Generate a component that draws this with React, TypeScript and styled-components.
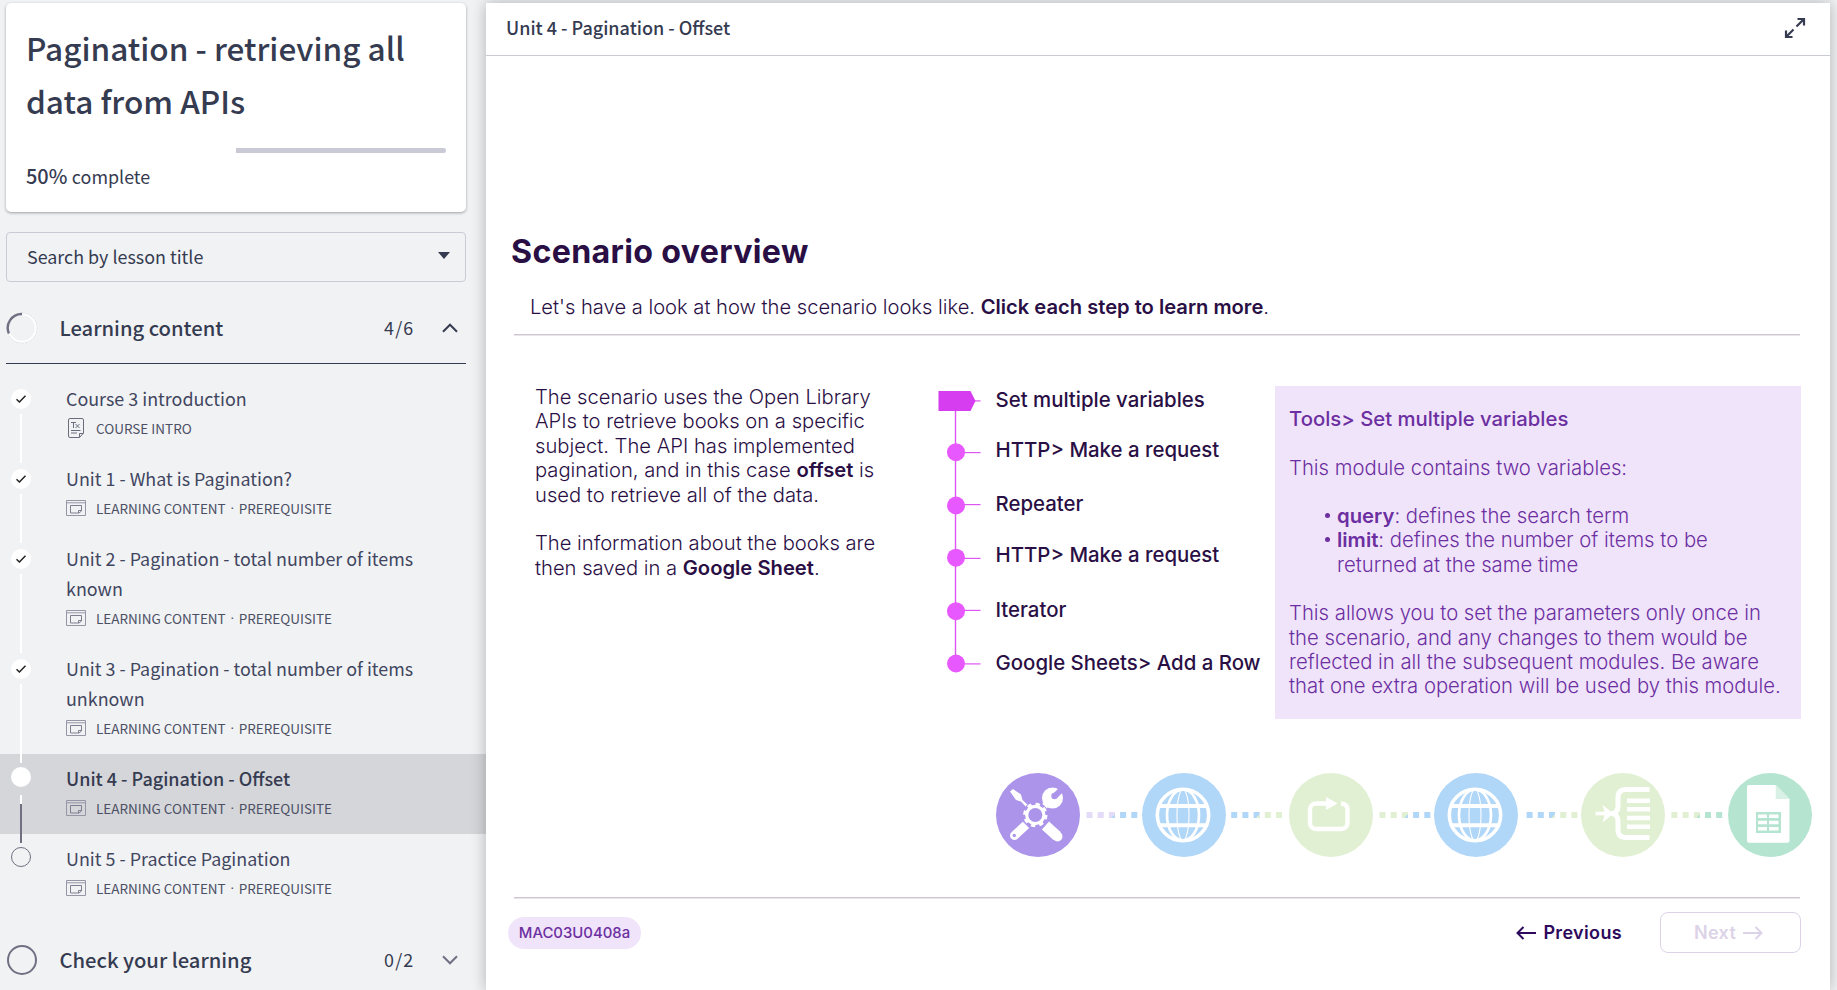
import React from "react";
import styled, { createGlobalStyle, css } from "styled-components";

const INK = "#353b50";
const MUTED = "#6f7183";
const LINE = "#c9cad6";
const SIDEBAR = "#f1f2f4";
const DEEP = "#2a0f45";
const VIOLET = "#6c2fa1";
const LILAC = "#f0e4fa";
const PINK = "#e858ff";

const GlobalStyle = createGlobalStyle`
  * { box-sizing: border-box; }
  html, body { margin: 0; height: 100%; }
  body { background: ${SIDEBAR}; overflow: hidden; }
  h1, h2, h3, p, ul { margin: 0; padding: 0; font-weight: inherit; }
`;

const Page = styled.div`
  display: flex;
  width: 1837px;
  height: 990px;
  overflow: hidden;
  background: ${SIDEBAR};
`;

/* ---------- Sidebar ---------- */

const Sidebar = styled.aside`
  width: 486px;
  flex: none;
  padding-top: 3px;
  display: flex;
  flex-direction: column;
  color: ${INK};
  font-family: "Noto Sans CJK SC", "Open Sans", sans-serif;
  font-size: 17.9px;
`;

const CourseCard = styled.section`
  margin: 0 20px 0 6px;
  height: 209px;
  flex: none;
  padding: 18px 20px 0;
  background: #fff;
  border-radius: 5px;
  box-shadow: 0 1px 3px rgba(0, 0, 0, 0.35);
`;

const CourseTitle = styled.h1`
  font-size: 31.55px;
  font-weight: 500;
  line-height: 53px;
  white-space: nowrap;
`;

const ProgressTrack = styled.div`
  margin-top: 21px;
  height: 5px;
  border-radius: 3px;
  background: linear-gradient(to right, #fff 50%, ${LINE} 50%);
`;

const ProgressText = styled.p`
  display: flex;
  align-items: baseline;
  gap: 4.5px;
  margin-top: 8px;
  line-height: 30px;
`;

const Percent = styled.strong`
  font-size: 19.9px;
  font-weight: 500;
`;

const SearchSelect = styled.div`
  margin: 20px 20px 0 6px;
  height: 50px;
  flex: none;
  display: flex;
  align-items: center;
  justify-content: space-between;
  padding: 0 15px 3px 20px;
  border: 1px solid ${LINE};
  border-radius: 4px;
`;

const SectionHeader = styled.header<{ $ruled?: boolean }>`
  margin: 0 20px 0 6px;
  height: 72px;
  flex: none;
  display: flex;
  align-items: center;
  padding-right: 8px;
  ${(p) =>
    p.$ruled &&
    css`
      margin-top: 10px;
      border-bottom: 1px solid ${INK};
    `}
`;

const SectionTitle = styled.h2`
  flex: 1;
  margin-left: 21.5px;
  font-size: 20.2px;
  font-weight: 500;
  line-height: 30px;
`;

const SectionCount = styled.span`
  width: 32px;
  margin: -2px 26px 0 0;
  letter-spacing: 1.2px;
  line-height: 30px;
  white-space: nowrap;
`;

const LessonList = styled.ul`
  list-style: none;
  margin: 10px 0;
`;

const Lesson = styled.li<{ $active?: boolean }>`
  display: flex;
  align-items: stretch;
  padding-bottom: 11px;
  background: ${(p) => (p.$active ? "#d5d6da" : "transparent")};
`;

const Rail = styled.div<{ $top: number }>`
  position: relative;
  z-index: 1;
  width: 20px;
  flex: none;
  margin: 0 35px -20px 11px;
  padding-top: ${(p) => p.$top}px;
  display: flex;
  flex-direction: column;
  align-items: center;
`;

const Marker = styled.span<{ $kind: "done" | "current" | "todo" }>`
  width: 20px;
  height: 20px;
  flex: none;
  display: flex;
  align-items: center;
  justify-content: center;
  border-radius: 50%;
  ${(p) =>
    p.$kind === "todo" ? css`border: 1px solid ${MUTED};` : css`background: #fff;`}
`;

const RailLine = styled.span<{ $half?: boolean }>`
  width: 2px;
  flex: 1;
  margin-top: ${(p) => (p.$half ? 8 : 5)}px;
  background: ${(p) =>
    p.$half ? `linear-gradient(#fff 9px, ${MUTED} 9px)` : "#fff"};
`;

const LessonBody = styled.div`
  padding-top: 9px;
  width: 360px;
`;

const LessonTitle = styled.h3<{ $active?: boolean }>`
  font-size: ${(p) => (p.$active ? 18 : 17.9)}px;
  font-weight: ${(p) => (p.$active ? 500 : 400)};
  line-height: 30px;
  color: ${(p) => (p.$active ? INK : "#414660")};
`;

const LessonMeta = styled.div`
  display: flex;
  align-items: center;
  height: 30px;
  color: #4c5064;
  font-size: 13.5px;
  line-height: 30px;
  white-space: nowrap;
  svg { margin: 0 10px 0 0; }
`;

const Separator = styled.span`
  width: 13px;
  text-align: center;
  font-family: "Open Sans", sans-serif;
`;

/* ---------- Lesson viewer ---------- */

const Viewer = styled.main`
  width: 1344px;
  flex: none;
  margin-top: 3px;
  display: flex;
  flex-direction: column;
  background: #fff;
  box-shadow: 0 0 14px rgba(0, 0, 0, 0.27);
  z-index: 2;
`;

const ViewerBar = styled.header`
  height: 53px;
  flex: none;
  display: flex;
  align-items: center;
  justify-content: space-between;
  padding: 0 24px 4px 20px;
  border-bottom: 1px solid ${LINE};
  color: ${INK};
  font: 500 18px/30px "Noto Sans CJK SC", "Open Sans", sans-serif;
  svg { margin-top: 2px; }
`;

const Slide = styled.article`
  flex: 1;
  display: flex;
  flex-direction: column;
  padding: 175px 29px 0 28px;
  color: ${DEEP};
  font: 300 20.2px/24.4px Inter, sans-serif;
  b { font-weight: 600; }
`;

const SlideTitle = styled.h1`
  margin-left: -3px;
  padding-top: 1px;
  font-size: 32.2px;
  font-weight: 700;
  line-height: 39px;
  letter-spacing: 0.32px;
`;

const Intro = styled.p`
  margin: 24px 0 0 16px;
  height: 39px;
  line-height: 24px;
  font-size: 20.15px;
`;

const Rule = styled.hr`
  width: 1286px;
  height: 2px;
  flex: none;
  margin: 0;
  border: 0;
  background: linear-gradient(#cdc8cd 50%, #e9e4e9 50%);
`;

const Columns = styled.div`
  display: flex;
  align-items: flex-start;
  height: 383px;
  flex: none;
  padding-top: 50px;
`;

const Description = styled.div`
  width: 424px;
  padding-left: 21px;
  margin-top: -1px;
  white-space: nowrap;
  p + p { margin-top: 24.4px; }
`;

const Steps = styled.div`
  display: flex;
  width: 337px;
`;

const StepList = styled.ul`
  list-style: none;
  margin: -1px 0 0 14.5px;
  display: grid;
  grid-template-rows: 50px 53.7px 51.8px 54.2px 53.3px 30px;
  font-size: 20.4px;
  font-weight: 500;
  line-height: 30px;
  white-space: nowrap;
`;

const InfoPanel = styled.section`
  width: 526px;
  height: 333px;
  flex: none;
  padding: 21px 0 0 14px;
  background: ${LILAC};
  color: ${VIOLET};
  font-size: 20.3px;
  line-height: 24.3px;
  white-space: nowrap;
`;

const InfoHeading = styled.h2`
  font-size: 20.3px;
  font-weight: 500;
`;

const InfoText = styled.p`
  margin-top: 24.3px;
`;

const VariableList = styled.ul`
  margin: 24.3px 0 0 49px;
  list-style: none;
`;

const Variable = styled.li`
  display: flex;
  &::before {
    content: "";
    width: 5px;
    height: 5px;
    margin: 9px 7px 0 -13px;
    border-radius: 50%;
    background: ${VIOLET};
  }
`;

const Flow = styled.div`
  display: flex;
  align-items: center;
  height: 178px;
  flex: none;
  padding-top: 14px;
  margin-left: 481.5px;
  svg { flex: none; }
`;

const SlideFooter = styled.footer`
  display: flex;
  align-items: center;
  padding-top: 13px;
`;

const CodePill = styled.span`
  width: 133px;
  height: 32px;
  margin-left: -6px;
  border-radius: 16px;
  background: ${LILAC};
  color: ${VIOLET};
  font-size: 14.9px;
  font-weight: 450;
  line-height: 33px;
  text-align: center;
`;

const NavButton = styled.button<{ $outlined?: boolean }>`
  height: 41px;
  display: flex;
  align-items: center;
  justify-content: center;
  gap: 7px;
  padding: 0;
  border: 0;
  background: none;
  color: #2d0a5c;
  font: 600 18px/24px Inter, sans-serif;
  letter-spacing: 0.35px;
  ${(p) =>
    p.$outlined
      ? css`
          width: 141px;
          padding-right: 4px;
          margin-left: 38px;
          border: 1.5px solid #ddd3e8;
          border-radius: 8px;
          color: #ddd3e8;
        `
      : css`margin-left: auto;`}
`;

/* ---------- Drawings ---------- */

const ProgressRing = ({ partial }: { partial?: boolean }) => (
  <svg width="32" height="32" viewBox="0 0 32 32" fill="none">
    {partial ? (
      <>
        <circle cx="16" cy="16" r="14.8" stroke="#bfc0c8" strokeWidth=".7" strokeDasharray="2 1" />
        <circle cx="16" cy="16" r="13.8" stroke="#fff" strokeWidth="2" />
        <path d="M16 2A14 14 0 0 0 2.9 21.5" stroke={MUTED} strokeWidth="2.4" />
      </>
    ) : (
      <circle cx="16" cy="16" r="14" stroke={MUTED} strokeWidth="2" />
    )}
  </svg>
);

const Chevron = ({ up }: { up?: boolean }) => (
  <svg width="16" height="10" viewBox="0 0 16 10" fill="none" stroke={up ? INK : MUTED} strokeWidth="2">
    <path d={up ? "M1 8.7 8 1.7l7 7" : "M1 1.3l7 7 7-7"} />
  </svg>
);

const Check = () => (
  <svg width="10" height="8" viewBox="0 0 10 8" fill="none" stroke="#222" strokeWidth="1.5">
    <path d="M.5 4.2 3.4 7 9.5.8" />
  </svg>
);

const TextPageIcon = () => (
  <svg width="20" height="20" viewBox="0 0 20 20" fill="none" stroke="#6a6d7e">
    <path d="M4 .5h12q1.500 0 1.500 1.500v13l-4 4.500H4q-1.500 0-1.500-1.500V2Q2.500.5 4 .5zM13.500 19.300V15.500h4M5 4.500h5M7.500 4.500v5.500M9.500 6l4 4M13.500 6l-4 4M5 12.500h9.500M5 15h6" />
  </svg>
);

const SlideIcon = () => (
  <svg width="20" height="16" viewBox="0 0 20 16" fill="none" stroke="#9496a6">
    <path d="M.5.5h19v15H.5zM.5 2.800h19" />
    <path d="M4.500 5.500h11v5.500l-2.500 2H4.500zM12.500 13v-2.500h3" stroke="#7d7f90" />
  </svg>
);

const ExpandIcon = () => (
  <svg width="22" height="22" viewBox="0 0 22 22" fill="none" stroke={INK} strokeWidth="2.2">
    <path d="M12.500 9.500 20 2M13.500 2H20v6.500M9.500 12.500 2 20M2 13.500V20h6.500" />
  </svg>
);

const Arrow = ({ right }: { right?: boolean }) => (
  <svg width="20" height="14" viewBox="0 0 20 14" fill="none" stroke="currentColor" strokeWidth="2">
    <path d={right ? "M0 7h18.500M12.500 1l6 6-6 6" : "M20 7H1.500M7.500 1l-6 6 6 6"} />
  </svg>
);

const stepTicks = [14.5, 66.2, 118.2, 172, 224, 277.5];
const stepDots = [65.7, 119, 171.2, 224.7, 277];

const Timeline = () => (
  <svg width="43" height="290" viewBox="0 0 43 290">
    <path d="M17.500 25V277" stroke="#dd55f2" strokeWidth="1.4" />
    {stepTicks.map((y) => (
      <path key={y} d={`M26 ${y + 0.4}H42.500`} stroke="#dd55f2" strokeWidth="1.2" />
    ))}
    <path d="M.5 5H32.500L37.500 15 32.500 25H.5z" fill="#d63df0" />
    {stepDots.map((y) => (
      <circle key={y} cx="18" cy={y + 0.5} r="9" fill={PINK} />
    ))}
  </svg>
);

const Disc = ({ fill, children }: { fill: string; children: React.ReactNode }) => (
  <svg width="84" height="84" viewBox="0 0 84 84" fill="none" stroke="#fff">
    <circle cx="42" cy="42" r="42" fill={fill} stroke="none" />
    {children}
  </svg>
);

const PURPLE = "#ab94ea";
const BLUE = "#b0d6f8";
const GREEN = "#e1f0d2";
const MINT = "#b5e5d0";

const ToolsDisc = () => (
  <Disc fill={PURPLE}>
    <path d="M14 18.500 17 16 25 21.500 26.500 27 33 33 31 35 25 28.500 20 27z" fill="#fff" stroke="none" />
    <path d="M47 35 53 28" strokeWidth="6.500" />
    <circle cx="56.500" cy="25" r="10.500" fill="#fff" stroke="none" />
    <path d="M59 23 69 13" stroke={PURPLE} strokeWidth="6" />
    <circle cx="58.500" cy="23" r="3.200" fill={PURPLE} stroke="none" />
    <path d="M32 50 18.500 62.500" strokeWidth="9" strokeLinecap="round" />
    <path d="M27 47 37 57" stroke={PURPLE} strokeWidth="2.500" />
    <circle cx="18.300" cy="62.500" r="1.700" fill={PURPLE} stroke="none" />
    <path d="M49.500 52.500 61 63" strokeWidth="10.500" />
    <path d="M60.500 62.500 61.500 63.500" strokeWidth="10" strokeLinecap="round" />
    <circle cx="39.300" cy="42" r="13" fill={PURPLE} stroke="none" />
    <circle cx="39.300" cy="42" r="8.600" strokeWidth="3.200" />
    <circle cx="39.300" cy="42" r="10.900" strokeWidth="2.600" strokeDasharray="4.280 4.280" />
  </Disc>
);

const GlobeDisc = () => (
  <Disc fill={BLUE}>
    <circle cx="41" cy="42" r="25.700" strokeWidth="3.600" />
    <ellipse cx="41" cy="42" rx="16" ry="25.500" strokeWidth="2.700" />
    <ellipse cx="41" cy="42" rx="6" ry="25.500" strokeWidth="1.100" />
    <path d="M17 33H65M17 52.300H65" strokeWidth="4" />
  </Disc>
);

const RepeatDisc = () => (
  <Disc fill={GREEN}>
    <path d="M39 30.500H27a6 6 0 0 0-6 6V50a6 6 0 0 0 6 6H52.500a6 6 0 0 0 6-6V36.500Q58.500 31 52 30.500" strokeWidth="4.400" />
    <path d="M37 24 48.500 30.500 37 37z" fill="#fff" stroke="none" />
  </Disc>
);

const IteratorDisc = () => (
  <Disc fill={GREEN}>
    <path d="M68.500 16.500H45q-8 0-8 8V33q0 6-5 7.500 5 1.500 5 7.500v8.500q0 8 8 8H68.500" strokeWidth="5" />
    <path d="M46 27.700H69M46 36.300H69M46 45H69M46 53.700H69" strokeWidth="4.500" />
    <path d="M14.500 40.500H26" strokeWidth="3.600" />
    <path d="M21.500 32 32.500 40.500 21.500 49.500 24 40.500z" fill="#fff" stroke="none" />
  </Disc>
);

const SheetDisc = () => (
  <Disc fill={MINT}>
    <path d="M21 12H47.700L61.500 26V67.700a2 2 0 0 1-2 2H21a2 2 0 0 1-2-2V14a2 2 0 0 1 2-2z" fill="#fff" stroke="none" />
    <path d="M47.700 12V26H61.500z" fill="#d8f0e6" stroke="none" />
    <path d="M28 39H53V60H28z" fill={MINT} stroke="none" />
    <path d="M30 43.200H39M41 43.200H50.500M30 49.500H39M41 49.500H50.500M30 55.800H39M41 55.800H50.500" strokeWidth="3.600" />
  </Disc>
);

const Connector = ({ width, start, from, to }: { width: number; start: number; from: string; to: string }) => (
  <svg width={width} height="6" viewBox={`0 0 ${width} 6`}>
    {[0, 1, 2, 3, 4].map((i) => (
      <rect key={i} x={start + i * 11.2} y="0" width="6" height="6" fill={i < 3 ? from : to} />
    ))}
    <path d={`M${start + 28.4} 6l-3.500 0 3.500-4z`} fill={to} />
  </svg>
);

/* ---------- Content ---------- */

type LessonData = {
  title: string;
  kind: "done" | "current" | "todo";
  intro?: boolean;
  last?: boolean;
};

const lessons: LessonData[] = [
  { title: "Course 3 introduction", kind: "done", intro: true },
  { title: "Unit 1 - What is Pagination?", kind: "done" },
  { title: "Unit 2 - Pagination - total number of items known", kind: "done" },
  { title: "Unit 3 - Pagination - total number of items unknown", kind: "done" },
  { title: "Unit 4 - Pagination - Offset", kind: "current" },
  { title: "Unit 5 - Practice Pagination", kind: "todo", last: true },
];

const steps = [
  "Set multiple variables",
  "HTTP> Make a request",
  "Repeater",
  "HTTP> Make a request",
  "Iterator",
  "Google Sheets> Add a Row",
];

const LessonItem = ({ title, kind, intro, last }: LessonData) => {
  const active = kind === "current";
  return (
    <Lesson $active={active}>
      <Rail $top={kind === "done" ? 15 : 13}>
        <Marker $kind={kind}>{kind === "done" && <Check />}</Marker>
        {!last && <RailLine $half={active} />}
      </Rail>
      <LessonBody>
        <LessonTitle $active={active}>{title}</LessonTitle>
        <LessonMeta>
          {intro ? <TextPageIcon /> : <SlideIcon />}
          {intro ? (
            "COURSE INTRO"
          ) : (
            <>
              LEARNING CONTENT<Separator>·</Separator>PREREQUISITE
            </>
          )}
        </LessonMeta>
      </LessonBody>
    </Lesson>
  );
};

export default function App() {
  return (
    <Page>
      <GlobalStyle />
      <Sidebar>
        <CourseCard>
          <CourseTitle>
            Pagination - retrieving all
            <br />
            data from APIs
          </CourseTitle>
          <ProgressTrack />
          <ProgressText>
            <Percent>50%</Percent> complete
          </ProgressText>
        </CourseCard>
        <SearchSelect>
          Search by lesson title
          <svg width="12" height="7" viewBox="0 0 12 7">
            <path d="M0 0h12L6 7z" fill={INK} />
          </svg>
        </SearchSelect>
        <SectionHeader $ruled>
          <ProgressRing partial />
          <SectionTitle>Learning content</SectionTitle>
          <SectionCount>4/6</SectionCount>
          <Chevron up />
        </SectionHeader>
        <LessonList>
          {lessons.map((l) => (
            <LessonItem key={l.title} {...l} />
          ))}
        </LessonList>
        <SectionHeader>
          <ProgressRing />
          <SectionTitle>Check your learning</SectionTitle>
          <SectionCount>0/2</SectionCount>
          <Chevron />
        </SectionHeader>
      </Sidebar>

      <Viewer>
        <ViewerBar>
          Unit 4 - Pagination - Offset
          <ExpandIcon />
        </ViewerBar>
        <Slide>
          <SlideTitle>Scenario overview</SlideTitle>
          <Intro>
            Let's have a look at how the scenario looks like. <b>Click each step to learn more</b>.
          </Intro>
          <Rule />
          <Columns>
            <Description>
              <p>
                The scenario uses the Open Library
                <br />
                APIs to retrieve books on a specific
                <br />
                subject. The API has implemented
                <br />
                pagination, and in this case <b>offset</b> is
                <br />
                used to retrieve all of the data.
              </p>
              <p>
                The information about the books are
                <br />
                then saved in a <b>Google Sheet</b>.
              </p>
            </Description>
            <Steps>
              <Timeline />
              <StepList>
                {steps.map((s, i) => (
                  <li key={i}>{s}</li>
                ))}
              </StepList>
            </Steps>
            <InfoPanel>
              <InfoHeading>Tools&gt; Set multiple variables</InfoHeading>
              <InfoText>This module contains two variables:</InfoText>
              <VariableList>
                <Variable>
                  <span>
                    <b>query</b>: defines the search term
                  </span>
                </Variable>
                <Variable>
                  <span>
                    <b>limit</b>: defines the number of items to be
                    <br />
                    returned at the same time
                  </span>
                </Variable>
              </VariableList>
              <InfoText>
                This allows you to set the parameters only once in
                <br />
                the scenario, and any changes to them would be
                <br />
                reflected in all the subsequent modules. Be aware
                <br />
                that one extra operation will be used by this module.
              </InfoText>
            </InfoPanel>
          </Columns>
          <Flow>
            <ToolsDisc />
            <Connector width={62.8} start={6.5} from="#e4dbf8" to={BLUE} />
            <GlobeDisc />
            <Connector width={62.7} start={5.2} from={BLUE} to={GREEN} />
            <RepeatDisc />
            <Connector width={61.5} start={6.5} from={GREEN} to={BLUE} />
            <GlobeDisc />
            <Connector width={62.8} start={8.6} from={BLUE} to={GREEN} />
            <IteratorDisc />
            <Connector width={62.7} start={6.4} from={GREEN} to={MINT} />
            <SheetDisc />
          </Flow>
          <Rule />
          <SlideFooter>
            <CodePill>MAC03U0408a</CodePill>
            <NavButton>
              <Arrow />
              Previous
            </NavButton>
            <NavButton $outlined>
              Next
              <Arrow right />
            </NavButton>
          </SlideFooter>
        </Slide>
      </Viewer>
    </Page>
  );
}
